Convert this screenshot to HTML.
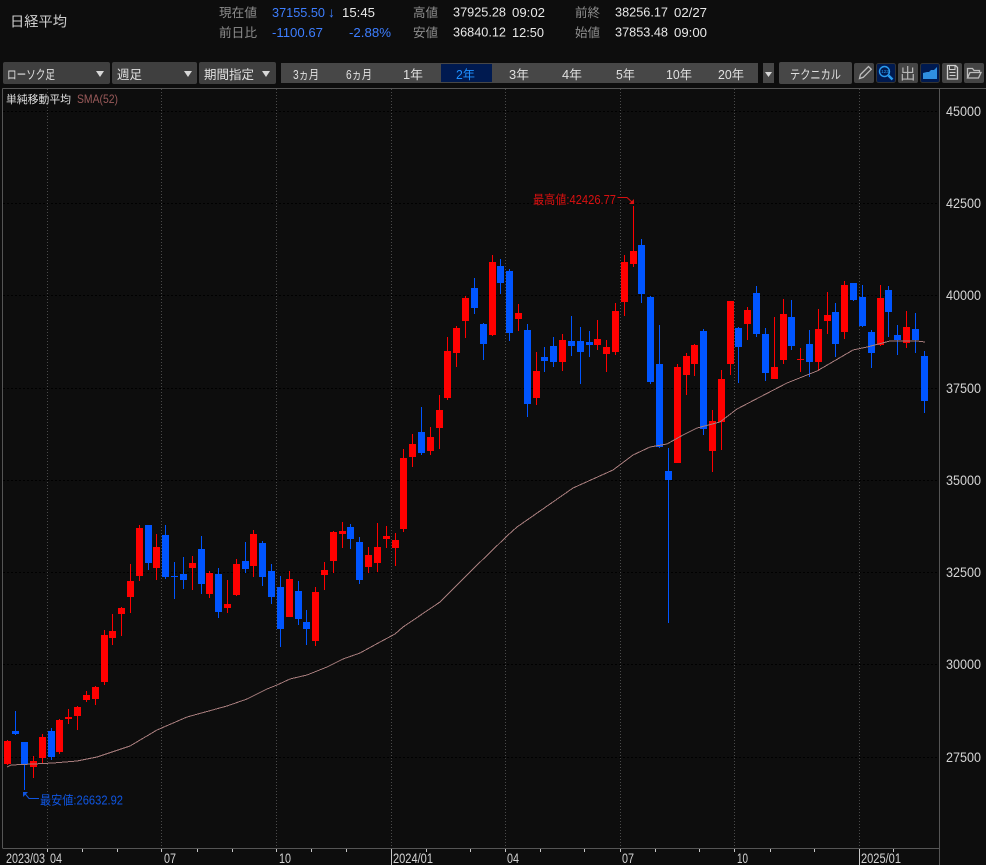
<!DOCTYPE html>
<html lang="ja"><head><meta charset="utf-8"><title>日経平均</title>
<style>
html,body{margin:0;padding:0;background:#0d0d0d;width:986px;height:865px;overflow:hidden}
svg{display:block;position:absolute;left:0;top:0}
text{font-family:"Liberation Sans","Noto Sans CJK JP",sans-serif;font-size:13px;fill:#d8d8d8}
.l{fill:#8e8e8e;font-size:12.5px}
.b{fill:#3d7eff}
.w{fill:#e8e8e8}
.tb{fill:#e0e0e0;font-size:12.5px}
.ax{fill:#d4d4d4;font-size:13.5px}
</style></head><body>
<svg width="986" height="865" viewBox="0 0 986 865" xmlns="http://www.w3.org/2000/svg">
<rect width="986" height="865" fill="#0d0d0d"/>

<!-- header -->
<text x="10" y="26.5" style="font-size:14px;fill:#cfcfcf" textLength="57" lengthAdjust="spacingAndGlyphs">日経平均</text>
<text class="l" x="219" y="17" textLength="38" lengthAdjust="spacingAndGlyphs">現在値</text>
<text class="l" x="219" y="37" textLength="38" lengthAdjust="spacingAndGlyphs">前日比</text>
<text class="b" x="272" y="17" textLength="53" lengthAdjust="spacingAndGlyphs">37155.50</text>
<text class="b" x="328" y="17" style="font-size:14px">↓</text>
<text class="w" x="342" y="17" textLength="33" lengthAdjust="spacingAndGlyphs">15:45</text>
<text class="b" x="272" y="37" textLength="51" lengthAdjust="spacingAndGlyphs">-1100.67</text>
<text class="b" x="349" y="37" textLength="42" lengthAdjust="spacingAndGlyphs">-2.88%</text>
<text class="l" x="413" y="17" textLength="25" lengthAdjust="spacingAndGlyphs">高値</text>
<text class="l" x="413" y="37" textLength="25" lengthAdjust="spacingAndGlyphs">安値</text>
<text class="w" x="453" y="16.5" textLength="53" lengthAdjust="spacingAndGlyphs">37925.28</text>
<text class="w" x="453" y="36.5" textLength="53" lengthAdjust="spacingAndGlyphs">36840.12</text>
<text class="w" x="512" y="17" textLength="33" lengthAdjust="spacingAndGlyphs">09:02</text>
<text class="w" x="512" y="37" textLength="32" lengthAdjust="spacingAndGlyphs">12:50</text>
<text class="l" x="575" y="17" textLength="25" lengthAdjust="spacingAndGlyphs">前終</text>
<text class="l" x="575" y="37" textLength="25" lengthAdjust="spacingAndGlyphs">始値</text>
<text class="w" x="615" y="16.5" textLength="53" lengthAdjust="spacingAndGlyphs">38256.17</text>
<text class="w" x="615" y="36.5" textLength="53" lengthAdjust="spacingAndGlyphs">37853.48</text>
<text class="w" x="674" y="17" textLength="33" lengthAdjust="spacingAndGlyphs">02/27</text>
<text class="w" x="674" y="37" textLength="33" lengthAdjust="spacingAndGlyphs">09:00</text>

<!-- toolbar -->
<g fill="#3f3f3f">
<rect x="3" y="62" width="107" height="22" rx="2"/>
<rect x="112" y="62" width="85" height="22" rx="2"/>
<rect x="199" y="62" width="77" height="22" rx="2"/>
<rect x="281" y="63" width="477" height="20" fill="#474747"/>
<rect x="763" y="63" width="11" height="20" fill="#474747"/>
<rect x="779" y="62" width="73" height="22" rx="2" fill="#474747"/>
<rect x="854" y="63" width="20" height="20" rx="2" fill="#444"/>
<rect x="898" y="63" width="20" height="20" rx="2" fill="#444"/>
<rect x="942" y="63" width="20" height="20" rx="2" fill="#444"/>
<rect x="964" y="63" width="20" height="20" rx="2" fill="#444"/>
</g>
<rect x="876.5" y="63.5" width="19" height="19" rx="2" fill="#001a50" stroke="#333"/>
<rect x="920.5" y="63.5" width="19" height="19" rx="2" fill="#001a50" stroke="#333"/>
<rect x="441" y="64" width="51" height="18" fill="#001a50"/>
<g fill="#d8d8d8">
<path d="M96 71h8l-4 6z"/><path d="M184 71h8l-4 6z"/><path d="M262 71h8l-4 6z"/><path d="M765 72h7l-3.500 5z"/>
</g>
<text class="tb" x="7" y="79" textLength="48" lengthAdjust="spacingAndGlyphs">ローソク足</text>
<text class="tb" x="117" y="79" textLength="25" lengthAdjust="spacingAndGlyphs">週足</text>
<text class="tb" x="204" y="79" textLength="50" lengthAdjust="spacingAndGlyphs">期間指定</text>
<text class="tb" x="293" y="79" textLength="26" lengthAdjust="spacingAndGlyphs">3ヵ月</text>
<text class="tb" x="346" y="79" textLength="26" lengthAdjust="spacingAndGlyphs">6ヵ月</text>
<text class="tb" x="403" y="79" textLength="20" lengthAdjust="spacingAndGlyphs">1年</text>
<text class="tb" x="456" y="79" textLength="19" lengthAdjust="spacingAndGlyphs" style="fill:#1e90ff">2年</text>
<text class="tb" x="509" y="79" textLength="20" lengthAdjust="spacingAndGlyphs">3年</text>
<text class="tb" x="562" y="79" textLength="20" lengthAdjust="spacingAndGlyphs">4年</text>
<text class="tb" x="616" y="79" textLength="19" lengthAdjust="spacingAndGlyphs">5年</text>
<text class="tb" x="666" y="79" textLength="26" lengthAdjust="spacingAndGlyphs">10年</text>
<text class="tb" x="718" y="79" textLength="26" lengthAdjust="spacingAndGlyphs">20年</text>
<text class="tb" x="790" y="79" textLength="51" lengthAdjust="spacingAndGlyphs">テクニカル</text>

<!-- tool icons -->
<path d="M859.500 78.500l1-4 8-8 2.800 2.800-8 8z" fill="none" stroke="#bdbdbd" stroke-width="1.300"/>
<circle cx="884.500" cy="71.500" r="5" fill="none" stroke="#2a9cf0" stroke-width="1.400"/>
<path d="M888.500 75.500l4 4" stroke="#2a9cf0" stroke-width="2.500" fill="none"/>
<text x="881.200" y="73.200" style="font-size:4.500px;fill:#2a9cf0">123</text>
<text x="900" y="79" style="font-size:15.500px;fill:#b8b8b8">出</text>
<path d="M923 79V73l4-1h2l2-2h3l3-3v12z" fill="#2f8fe0"/>
<path d="M947.500 65.500h8l2 2v11.500h-10z" fill="none" stroke="#cfcfcf" stroke-width="1.300"/>
<path d="M949.500 65.500v4h5.500v-4M949.500 72.500h6M949.500 75.500h6" fill="none" stroke="#cfcfcf"/>
<path d="M967.500 78V68.500h5l1.500 2h5.500v2M967.500 78h11l2.500-5.500h-11z" fill="none" stroke="#bdbdbd" stroke-width="1.300"/>

<!-- chart grid -->
<g stroke="#000" stroke-dasharray="2 2" stroke-width="1" shape-rendering="crispEdges">
<path d="M3 111.500H939M3 203.500H939M3 295.500H939M3 388.500H939M3 480.500H939M3 572.500H939M3 664.500H939M3 757.500H939"/>
</g>
<g stroke="#4a4a4a" stroke-dasharray="1 2" stroke-width="1" shape-rendering="crispEdges">
<path d="M47.500 89V848M161.500 89V848M276.500 89V848M391.500 89V848M505.500 89V848M620.500 89V848M734.500 89V848M859.500 89V848"/>
</g>

<!-- red candles -->
<g fill="none" stroke="#ff0000" shape-rendering="crispEdges">
<path stroke-width="1" d="M7.500 740V765M33.500 756V778M42.500 734V763M59.500 719V754M68.500 709V724M77.500 706V730M86.500 691V702M95.500 686V705M104.500 630V685M112.500 614V645M121.500 607V636M130.500 564V613M139.500 525V581M156.500 534V580M192.500 556V590M209.500 571V598M227.500 580V613M236.500 559V596M253.500 530V577M289.500 571V617M315.500 587V646M324.500 562V590M333.500 531V573M342.500 522V548M368.500 547V573M377.500 523V572M386.500 526V548M395.500 533V566M403.500 449V532M412.500 434V467M430.500 427V455M439.500 395V449M447.500 337V400M456.500 326V367M465.500 296V338M492.500 255V336M518.500 304V331M536.500 352V405M562.500 334V371M597.500 320V350M606.500 340V372M615.500 303V355M624.500 255V316M633.500 206V267M677.500 364V463M686.500 353V395M694.500 344V376M712.500 410V472M721.500 370V450M730.500 301V375M747.500 307V340M774.500 317V379M783.500 299V364M800.500 348V372M818.500 309V371M827.500 292V334M844.500 281V339M880.500 285V346M906.500 311V348"/>
<path stroke-width="7" d="M7.500 741V764M33.500 761V767M42.500 737V758M59.500 720V752M68.500 717V719M77.500 707V716M86.500 695V700M95.500 687V699M104.500 635V682M112.500 631V638M121.500 608V614M130.500 581V597M139.500 528V576M156.500 547V568M192.500 563V568M209.500 573V594M227.500 604V608M236.500 564V595M253.500 534V566M289.500 579V617M315.500 592V641M324.500 570V575M333.500 532V561M342.500 531V534M368.500 555V567M377.500 547V563M386.500 536V539M395.500 540V548M403.500 458V529M412.500 444V457M430.500 437V451M439.500 410V428M447.500 351V398M456.500 328V353M465.500 298V321M492.500 262V335M518.500 313V319M536.500 371V398M562.500 340V362M597.500 339V345M606.500 347V354M615.500 311V352M624.500 262V302M633.500 251V264M677.500 367V463M686.500 356V375M694.500 345V364M712.500 421V451M721.500 379V422M730.500 301V364M747.500 310V324M774.500 367V379M783.500 314V360M800.500 359V360M818.500 329V362M827.500 315V321M844.500 285V332M880.500 298V345M906.500 327V343"/>
</g>
<!-- blue candles -->
<g fill="none" stroke="#0055ff" shape-rendering="crispEdges">
<path stroke-width="1" d="M15.500 711V735M24.500 742V790M51.500 728V760M148.500 525V570M165.500 525V579M174.500 562V599M183.500 557V589M201.500 536V594M218.500 568V618M245.500 542V573M262.500 541V586M271.500 564V604M280.500 576V647M298.500 581V625M306.500 610V645M350.500 524V549M359.500 537V584M421.500 407V455M474.500 278V314M483.500 323V360M500.500 259V294M509.500 269V341M527.500 324V417M544.500 347V372M553.500 337V367M571.500 316V356M580.500 327V384M589.500 331V357M641.500 239V303M650.500 296V384M659.500 325V448M668.500 448V623M703.500 329V435M738.500 327V383M756.500 286V337M765.500 328V381M791.500 300V350M809.500 330V377M835.500 303V357M853.500 283V301M862.500 285V327M871.500 330V368M888.500 286V337M897.500 325V355M915.500 313V353M924.500 351V413"/>
<path stroke-width="7" d="M15.500 731V734M24.500 742V764M51.500 731V757M148.500 525V563M165.500 535V577M174.500 576V577M183.500 574V580M201.500 549V584M218.500 574V612M245.500 561V569M262.500 543V577M271.500 571V597M280.500 587V629M298.500 591V619M306.500 622V629M350.500 527V539M359.500 542V580M421.500 432V453M474.500 288V308M483.500 324V344M500.500 266V283M509.500 271V333M527.500 330V404M544.500 357V361M553.500 346V362M571.500 341V346M580.500 341V352M589.500 342V345M641.500 245V294M650.500 297V382M659.500 364V447M668.500 471V480M703.500 331V429M738.500 328V347M756.500 293V334M765.500 334V373M791.500 317V346M809.500 344V362M835.500 312V344M853.500 283V300M862.500 297V326M871.500 332V353M888.500 290V312M897.500 335V340M915.500 329V340M924.500 356V401"/>
</g>

<!-- SMA -->
<polyline fill="none" stroke="#a67c7c" stroke-width="1" shape-rendering="crispEdges" points="7,767 11,765 33,764 53,763 77,761 97,757 130,746 157,730 187,717 227,706 247,699 267,689 277,685 290,679 307,675 327,667 343,659 360,653 380,642 395,634 403,627 440,602 455,587 473,569 507,536 517,527 540,511 573,488 613,470 633,455 650,447 667,444 683,435 697,428 720,422 737,409 760,397 787,383 817,371 853,350 867,347 890,341 917,341 925,342"/>

<!-- annotations -->
<text x="533" y="204" style="font-size:12.500px;fill:#d81010" textLength="83" lengthAdjust="spacingAndGlyphs">最高値:42426.77</text>
<path d="M617.500 197.500H627L633 203" fill="none" stroke="#d81010"/>
<path d="M629 204H634V199z" fill="#d81010"/>
<text x="40" y="804.500" style="font-size:12.500px;fill:#0f55e0" textLength="83" lengthAdjust="spacingAndGlyphs">最安値:26632.92</text>
<path d="M39 798.500H29L24.500 793" fill="none" stroke="#0f55e0"/>
<path d="M23 792H28L23 797z" fill="#0f55e0"/>

<!-- frame -->
<g stroke="#555" stroke-width="1" fill="none" shape-rendering="crispEdges">
<path d="M2.500 88.500H986M2.500 88.500V848M2.500 848.500H939M939.500 88.500V865"/>
</g>
<g stroke="#c8c8c8" stroke-width="1" fill="none" shape-rendering="crispEdges">
<path d="M47.500 849V852M82.500 849V852M117.500 849V852M161.500 849V852M197.500 849V852M232.500 849V852M276.500 849V852M311.500 849V852M346.500 849V852M426.500 849V852M470.500 849V852M505.500 849V852M540.500 849V852M584.500 849V852M620.500 849V852M655.500 849V852M699.500 849V852M734.500 849V852M770.500 849V852M814.500 849V852M893.500 849V852"/>
<path d="M391.500 849V865M859.500 849V865"/>
</g>

<!-- SMA legend -->
<text x="6" y="103" style="font-size:10.800px;fill:#e0e0e0" textLength="65" lengthAdjust="spacingAndGlyphs">単純移動平均</text>
<text x="77" y="103" style="font-size:12px;fill:#9a5a5a" textLength="41" lengthAdjust="spacingAndGlyphs">SMA(52)</text>

<!-- axis labels -->
<text class="ax" x="946" y="116" textLength="35" lengthAdjust="spacingAndGlyphs">45000</text>
<text class="ax" x="946" y="208" textLength="35" lengthAdjust="spacingAndGlyphs">42500</text>
<text class="ax" x="946" y="300" textLength="35" lengthAdjust="spacingAndGlyphs">40000</text>
<text class="ax" x="946" y="393" textLength="35" lengthAdjust="spacingAndGlyphs">37500</text>
<text class="ax" x="946" y="485" textLength="35" lengthAdjust="spacingAndGlyphs">35000</text>
<text class="ax" x="946" y="577" textLength="35" lengthAdjust="spacingAndGlyphs">32500</text>
<text class="ax" x="946" y="669" textLength="35" lengthAdjust="spacingAndGlyphs">30000</text>
<text class="ax" x="946" y="762" textLength="35" lengthAdjust="spacingAndGlyphs">27500</text>
<text class="ax" x="6" y="863" textLength="39" lengthAdjust="spacingAndGlyphs">2023/03</text>
<text class="ax" x="50" y="863" textLength="12" lengthAdjust="spacingAndGlyphs">04</text>
<text class="ax" x="164" y="863" textLength="12" lengthAdjust="spacingAndGlyphs">07</text>
<text class="ax" x="279" y="863" textLength="12" lengthAdjust="spacingAndGlyphs">10</text>
<text class="ax" x="393" y="863" textLength="40" lengthAdjust="spacingAndGlyphs">2024/01</text>
<text class="ax" x="507" y="863" textLength="12" lengthAdjust="spacingAndGlyphs">04</text>
<text class="ax" x="622" y="863" textLength="12" lengthAdjust="spacingAndGlyphs">07</text>
<text class="ax" x="737" y="863" textLength="11" lengthAdjust="spacingAndGlyphs">10</text>
<text class="ax" x="861" y="863" textLength="40" lengthAdjust="spacingAndGlyphs">2025/01</text>
</svg>
</body></html>
